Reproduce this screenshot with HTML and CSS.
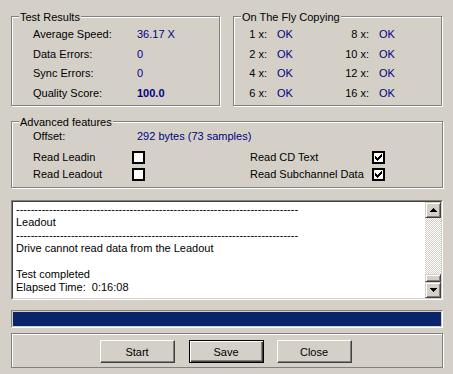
FILE: index.html
```html
<!DOCTYPE html>
<html lang="en">
<head>
  <meta charset="UTF-8" />
  <title>CD Quality Test</title>
  <link rel="stylesheet" href="styles.css">
</head>
<body>

<div class="dialog">
  <div class="top-row">
    <div class="group results">
      <span class="group-title">Test Results</span>
      <div class="stats">
        <span>Average Speed:</span><span class="val">36.17 X</span>
        <span>Data Errors:</span><span class="val">0</span>
        <span>Sync Errors:</span><span class="val">0</span>
        <span>Quality Score:</span><span class="val bold">100.0</span>
      </div>
    </div>

    <div class="group copying">
      <span class="group-title">On The Fly Copying</span>
      <div class="speeds">
        <span class="sp">1 x:</span><span class="val">OK</span><span class="sp">8 x:</span><span class="val">OK</span>
        <span class="sp">2 x:</span><span class="val">OK</span><span class="sp">10 x:</span><span class="val">OK</span>
        <span class="sp">4 x:</span><span class="val">OK</span><span class="sp">12 x:</span><span class="val">OK</span>
        <span class="sp">6 x:</span><span class="val">OK</span><span class="sp">16 x:</span><span class="val">OK</span>
      </div>
    </div>
  </div>

  <div class="group advanced">
    <span class="group-title">Advanced features</span>
    <div class="offset-row">
      <span>Offset:</span><span class="val">292 bytes (73 samples)</span>
    </div>
    <div class="options">
      <span>Read Leadin</span><span class="check"></span><span></span>
      <span>Read CD Text</span>
      <span class="check"><svg width="9" height="9" viewBox="0 0 9 9" shape-rendering="crispEdges"><path d="M1 3h1v1h1v1h1V4h1V3h1V2h1V1h1v3H7v1H6v1H5v1H4v1H3V7H2V6H1z" fill="#000"/></svg></span>
      <span>Read Leadout</span><span class="check"></span><span></span>
      <span>Read Subchannel Data</span>
      <span class="check"><svg width="9" height="9" viewBox="0 0 9 9" shape-rendering="crispEdges"><path d="M1 3h1v1h1v1h1V4h1V3h1V2h1V1h1v3H7v1H6v1H5v1H4v1H3V7H2V6H1z" fill="#000"/></svg></span>
    </div>
  </div>

  <div class="log">
    <div class="log-inner">
      <div class="log-text">-----------------------------------------------------------------------------
Leadout
-----------------------------------------------------------------------------
Drive cannot read data from the Leadout

Test completed
Elapsed Time:  0:16:08</div>
      <div class="scrollbar">
        <div class="sb-btn"><svg width="7" height="4" viewBox="0 0 7 4" shape-rendering="crispEdges"><path d="M3 0h1v1h1v1h1v1h1v1H0V3h1V2h1V1h1z" fill="#000"/></svg></div>
        <div class="sb-track"></div>
        <div class="sb-thumb"></div>
        <div class="sb-btn"><svg width="7" height="4" viewBox="0 0 7 4" shape-rendering="crispEdges"><path d="M0 0h7v1H6v1H5v1H4v1H3V3H2V2H1V1H0z" fill="#000"/></svg></div>
      </div>
    </div>
  </div>

  <div class="progress"><div class="progress-fill" style="width: 100%"></div></div>

  <div class="group buttons">
    <button class="btn">Start</button>
    <button class="btn default">Save</button>
    <button class="btn">Close</button>
  </div>
</div>

</body>
</html>
```

FILE: styles.css
```css
body {
  margin: 0;
  background-color: #d4d0c8;
  font-family: "Liberation Sans", Arial, sans-serif;
  font-size: 11px;
  line-height: 13px;
  color: #000;
}

.dialog {
  width: 432px;
  padding: 16px 0 0 11px;
}

.top-row {
  display: flex;
  gap: 13px;
}

/* etched group box */
.group {
  position: relative;
  box-sizing: border-box;
  border: 1px solid #808080;
  box-shadow: 1px 1px 0 #fff, inset 1px 1px 0 #fff;
}

.group-title {
  position: absolute;
  top: -6px;
  left: 7px;
  padding: 0 1px;
  background-color: #d4d0c8;
}

.val {
  color: #000080;
}

.bold {
  font-weight: bold;
}

.results, .copying {
  width: 209px;
  height: 90px;
}

.stats {
  display: grid;
  grid-template-columns: 104px auto;
  grid-auto-rows: 19.5px;
  align-items: center;
  padding: 8px 0 0 21px;
}

.speeds {
  display: grid;
  grid-template-columns: 33px 49px 33px 1fr;
  grid-auto-rows: 19.5px;
  align-items: center;
  column-gap: 10px;
  padding-top: 8px;
}

.sp {
  text-align: right;
}

.advanced {
  height: 67px;
  margin-top: 15px;
  padding: 6px 0 4px 21px;
}

.offset-row {
  display: grid;
  grid-template-columns: 104px auto;
  align-items: center;
  height: 17px;
  margin-bottom: 4px;
}

.options {
  display: grid;
  grid-template-columns: 99px 13px 105px 122px 13px;
  grid-auto-rows: 17px;
  align-items: center;
}

.check {
  box-sizing: border-box;
  width: 13px;
  height: 13px;
  border: 2px solid #000;
  background-color: #fff;
}

.check svg {
  display: block;
}

/* log box */
.log {
  box-sizing: border-box;
  height: 100px;
  margin-top: 12px;
  border: 1px solid;
  border-color: #808080 #fff #fff #808080;
}

.log-inner {
  display: flex;
  height: 100%;
  box-sizing: border-box;
  border: 1px solid;
  border-color: #404040 #d4d0c8 #d4d0c8 #404040;
}

.log-text {
  flex: 1;
  padding: 1px 0 0 3px;
  background-color: #fff;
  white-space: pre;
  overflow: hidden;
}

.scrollbar {
  display: flex;
  flex-direction: column;
  width: 16px;
}

.sb-btn, .sb-thumb {
  box-sizing: border-box;
  background-color: #d4d0c8;
  border: 1px solid;
  border-color: #d4d0c8 #404040 #404040 #d4d0c8;
  box-shadow: inset 1px 1px 0 #fff, inset -1px -1px 0 #808080;
}

.sb-btn {
  display: flex;
  align-items: center;
  justify-content: center;
  height: 16px;
}

.sb-thumb {
  height: 8px;
}

.sb-track {
  flex: 1;
  background: repeating-conic-gradient(#fff 0 25%, #d4d0c8 0 50%) 0 0 / 2px 2px;
}

/* progress */
.progress {
  box-sizing: border-box;
  height: 18px;
  margin-top: 10px;
  padding: 1px;
  border: 1px solid;
  border-color: #808080 #fff #fff #808080;
}

.progress-fill {
  height: 100%;
  background-color: #0a246a;
}

/* buttons */
.buttons {
  display: flex;
  justify-content: center;
  gap: 13px;
  height: 35px;
  margin-top: 5px;
  padding: 6px 3px 0 0;
}

.btn {
  box-sizing: border-box;
  width: 75px;
  height: 23px;
  padding: 0;
  font-family: inherit;
  font-size: 11px;
  color: #000;
  background-color: #d4d0c8;
  border: 1px solid;
  border-color: #fff #404040 #404040 #fff;
  box-shadow: inset -1px -1px 0 #808080;
}

.btn.default {
  margin-left: 1px;
  border-color: #000;
  box-shadow: inset 1px 1px 0 #fff, inset -1px -1px 0 #404040, inset -2px -2px 0 #808080;
}
```
